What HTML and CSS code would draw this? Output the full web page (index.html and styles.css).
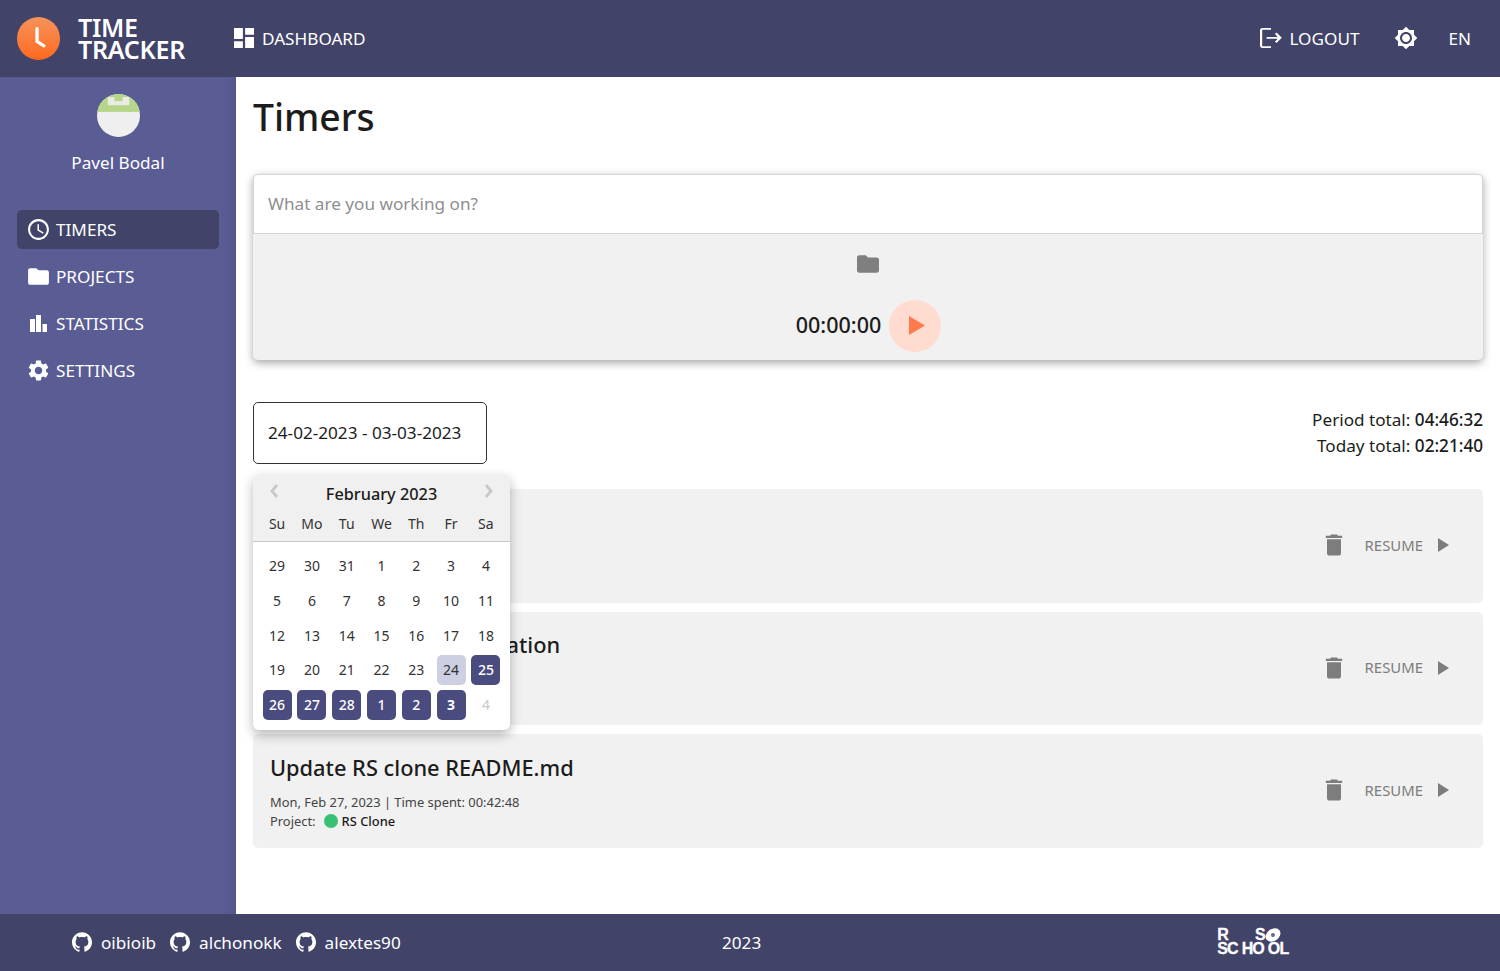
FILE: index.html
```html
<!DOCTYPE html>
<html lang="en">
<head>
<meta charset="utf-8">
<title>Time Tracker</title>
<link rel="stylesheet" href="styles.css">
</head>
<body>
<header class="topbar">
  <div class="brand">
    <svg class="brand-logo" viewBox="0 0 44 44"><defs><linearGradient id="lg" x1="0" y1="0" x2="0" y2="1"><stop offset="0" stop-color="#f5935a"/><stop offset="1" stop-color="#ff6a1f"/></linearGradient></defs><circle cx="22" cy="22" r="22" fill="url(#lg)"/><path d="M20.500 12v13l7 4.500" fill="none" stroke="#fff" stroke-width="3.400" stroke-linecap="round" stroke-linejoin="round"/></svg>
    <div class="brand-name">TIME<br>TRACKER</div>
  </div>
  <a class="top-link dash"><svg class="ico-dash" viewBox="3 3 18 18"><path d="M3 13h8V3H3v10zm0 8h8v-6H3v6zm10 0h8V11h-8v10zm0-18v6h8V3h-8z"/></svg>DASHBOARD</a>
  <div class="top-right">
    <a class="top-link logout"><svg class="ico-logout" viewBox="2 3 20 18"><path d="M17 7l-1.410 1.410L18.170 11H8v1.600h10.170l-2.580 2.580L17 16.600l4.800-4.800zM4 4.600h8V3H4c-1.100 0-2 .9-2 2v14c0 1.100.9 2 2 2h8v-1.600H4z"/></svg>LOGOUT</a>
    <svg class="ico-bright" viewBox="0 0 24 24"><path d="M20 8.690V4h-4.690L12 .69 8.690 4H4v4.690L.69 12 4 15.310V20h4.690L12 23.310 15.310 20H20v-4.690L23.310 12 20 8.690zM12 18c-3.310 0-6-2.690-6-6s2.690-6 6-6 6 2.690 6 6-2.690 6-6 6zm0-10c-2.210 0-4 1.790-4 4s1.790 4 4 4 4-1.790 4-4-1.790-4-4-4z"/></svg>
    <span class="lang">EN</span>
  </div>
</header>
<div class="middle">
  <aside class="sidebar">
    <svg class="avatar" viewBox="0 0 42 42"><defs><clipPath id="ac"><circle cx="21" cy="21" r="21"/></clipPath></defs><g clip-path="url(#ac)"><rect width="42" height="42" fill="#efefef"/><rect width="42" height="17.500" fill="#b6d68a"/><rect x="10.500" y="3" width="21" height="8" fill="#e9ebe4"/><rect x="17" y="2" width="8" height="5" fill="#b6d68a"/></g></svg>
    <div class="user">Pavel Bodal</div>
    <nav class="nav">
      <a class="nav-item active"><svg viewBox="0 0 24 24"><path d="M11.990 2C6.470 2 2 6.480 2 12s4.470 10 9.990 10C17.520 22 22 17.520 22 12S17.520 2 11.990 2zM12 20c-4.420 0-8-3.580-8-8s3.580-8 8-8 8 3.580 8 8-3.580 8-8 8zm.5-13H11v6l5.250 3.150.75-1.230-4.500-2.670z"/></svg>TIMERS</a>
      <a class="nav-item"><svg viewBox="0 0 24 24"><path d="M10 4H4c-1.100 0-1.990.9-1.990 2L2 18c0 1.100.9 2 2 2h16c1.100 0 2-.9 2-2V8c0-1.100-.9-2-2-2h-8l-2-2z"/></svg>PROJECTS</a>
      <a class="nav-item"><svg viewBox="0 0 25 25"><path d="M4 8h5v13H4zM10 4h5v17h-5zM16.500 13H21v8h-4.500z"/></svg>STATISTICS</a>
      <a class="nav-item"><svg viewBox="0 0 24 24"><path d="M19.140 12.940c.04-.3.06-.61.06-.94 0-.32-.02-.64-.07-.94l2.030-1.580c.18-.14.23-.41.12-.61l-1.920-3.320c-.12-.22-.37-.29-.59-.22l-2.390.96c-.5-.38-1.030-.7-1.620-.94l-.36-2.540c-.04-.24-.24-.41-.48-.41h-3.840c-.24 0-.43.17-.47.41l-.36 2.540c-.59.24-1.130.57-1.620.94l-2.390-.96c-.22-.08-.47 0-.59.22L2.740 8.870c-.12.21-.08.47.12.61l2.030 1.580c-.05.3-.09.63-.09.94s.02.64.07.94l-2.030 1.580c-.18.14-.23.41-.12.61l1.920 3.320c.12.22.37.29.59.22l2.390-.96c.5.38 1.030.7 1.620.94l.36 2.540c.05.24.24.41.48.41h3.840c.24 0 .44-.17.47-.41l.36-2.540c.59-.24 1.130-.56 1.620-.94l2.390.96c.22.08.47 0 .59-.22l1.920-3.320c.12-.22.07-.47-.12-.61l-2.010-1.580zM12 15.600c-1.980 0-3.600-1.620-3.600-3.600s1.620-3.600 3.600-3.600 3.600 1.620 3.600 3.600-1.620 3.600-3.600 3.600z"/></svg>SETTINGS</a>
    </nav>
  </aside>
  <main class="content">
    <h1 class="title">Timers</h1>
    <section class="new-timer">
      <div class="task-input">What are you working on?</div>
      <div class="new-timer-body">
        <svg class="ico-folder" viewBox="2 4 20 16"><path d="M10 4H4c-1.100 0-1.990.9-1.990 2L2 18c0 1.100.9 2 2 2h16c1.100 0 2-.9 2-2V8c0-1.100-.9-2-2-2h-8l-2-2z"/></svg>
        <div class="clock-row">
          <span class="clock">00:00:00</span>
          <span class="play"><svg viewBox="0 0 16 19"><path d="M0 0v19l16-9.500z"/></svg></span>
        </div>
      </div>
    </section>
    <section class="filter-row">
      <div class="date-wrap">
        <div class="date-input">24-02-2023 - 03-03-2023</div>
        <div class="calendar">
          <div class="cal-head">
            <div class="cal-month">
              <svg viewBox="0 0 10 16"><path d="M8 2L3 8l5 6" /></svg>
              <span>February 2023</span>
              <svg viewBox="0 0 10 16"><path d="M2 2l5 6-5 6" /></svg>
            </div>
            <div class="cal-grid cal-names"><span>Su</span><span>Mo</span><span>Tu</span><span>We</span><span>Th</span><span>Fr</span><span>Sa</span></div>
          </div>
          <div class="cal-grid cal-days">
            <span>29</span><span>30</span><span>31</span><span>1</span><span>2</span><span>3</span><span>4</span>
            <span>5</span><span>6</span><span>7</span><span>8</span><span>9</span><span>10</span><span>11</span>
            <span>12</span><span>13</span><span>14</span><span>15</span><span>16</span><span>17</span><span>18</span>
            <span>19</span><span>20</span><span>21</span><span>22</span><span>23</span><span class="start">24</span><span class="sel">25</span>
            <span class="sel">26</span><span class="sel">27</span><span class="sel">28</span><span class="sel">1</span><span class="sel">2</span><span class="sel bold">3</span><span class="off">4</span>
          </div>
        </div>
      </div>
      <div class="totals">
        <div>Period total: <b>04:46:32</b></div>
        <div>Today total: <b>02:21:40</b></div>
      </div>
    </section>
    <section class="timers">
      <article class="timer">
        <div class="timer-info">
          <div class="timer-title">Write project tests</div>
          <div class="timer-meta">Feb 28, 2023 | Time spent: 01:42:04</div>
          <div class="timer-meta">Project: <i class="dot"></i><b>RS Clone</b></div>
        </div>
        <div class="timer-actions"><svg class="ico-trash" viewBox="0 0 24 24"><path d="M6 19c0 1.100.9 2 2 2h8c1.100 0 2-.9 2-2V7H6v12zM19 4h-3.500l-1-1h-5l-1 1H5v2h14V4z"/></svg><span class="resume">RESUME</span><svg class="ico-play" viewBox="0 0 24 24"><path d="M8 5v14l11-7z"/></svg></div>
      </article>
      <article class="timer">
        <div class="timer-info">
          <div class="timer-title">Design project presentation</div>
          <div class="timer-meta">Feb 28, 2023 | Time spent: 00:39:36</div>
          <div class="timer-meta">Project: <i class="dot"></i><b>RS Clone</b></div>
        </div>
        <div class="timer-actions"><svg class="ico-trash" viewBox="0 0 24 24"><path d="M6 19c0 1.100.9 2 2 2h8c1.100 0 2-.9 2-2V7H6v12zM19 4h-3.500l-1-1h-5l-1 1H5v2h14V4z"/></svg><span class="resume">RESUME</span><svg class="ico-play" viewBox="0 0 24 24"><path d="M8 5v14l11-7z"/></svg></div>
      </article>
      <article class="timer">
        <div class="timer-info">
          <div class="timer-title">Update RS clone README.md</div>
          <div class="timer-meta">Mon, Feb 27, 2023 | Time spent: 00:42:48</div>
          <div class="timer-meta">Project: <i class="dot"></i><b>RS Clone</b></div>
        </div>
        <div class="timer-actions"><svg class="ico-trash" viewBox="0 0 24 24"><path d="M6 19c0 1.100.9 2 2 2h8c1.100 0 2-.9 2-2V7H6v12zM19 4h-3.500l-1-1h-5l-1 1H5v2h14V4z"/></svg><span class="resume">RESUME</span><svg class="ico-play" viewBox="0 0 24 24"><path d="M8 5v14l11-7z"/></svg></div>
      </article>
    </section>
  </main>
</div>
<footer class="footer">
  <div class="authors">
    <a class="author"><svg viewBox="0 0 24 24"><path d="M12 .297c-6.630 0-12 5.373-12 12 0 5.303 3.438 9.800 8.205 11.385.6.113.82-.258.82-.577 0-.285-.01-1.040-.015-2.040-3.338.724-4.042-1.610-4.042-1.610C4.422 18.070 3.633 17.700 3.633 17.700c-1.087-.744.084-.729.084-.729 1.205.084 1.838 1.236 1.838 1.236 1.070 1.835 2.809 1.305 3.495.998.108-.776.417-1.305.76-1.605-2.665-.3-5.466-1.332-5.466-5.930 0-1.310.465-2.380 1.235-3.220-.135-.303-.54-1.523.105-3.176 0 0 1.005-.322 3.300 1.230.96-.267 1.980-.399 3-.405 1.020.006 2.040.138 3 .405 2.280-1.552 3.285-1.230 3.285-1.230.645 1.653.24 2.873.12 3.176.765.84 1.230 1.910 1.230 3.220 0 4.610-2.805 5.625-5.475 5.920.42.36.81 1.096.81 2.220 0 1.606-.015 2.896-.015 3.286 0 .315.21.69.825.57C20.565 22.092 24 17.592 24 12.297c0-6.627-5.373-12-12-12"/></svg>oibioib</a>
    <a class="author"><svg viewBox="0 0 24 24"><path d="M12 .297c-6.630 0-12 5.373-12 12 0 5.303 3.438 9.800 8.205 11.385.6.113.82-.258.82-.577 0-.285-.01-1.040-.015-2.040-3.338.724-4.042-1.610-4.042-1.610C4.422 18.070 3.633 17.700 3.633 17.700c-1.087-.744.084-.729.084-.729 1.205.084 1.838 1.236 1.838 1.236 1.070 1.835 2.809 1.305 3.495.998.108-.776.417-1.305.76-1.605-2.665-.3-5.466-1.332-5.466-5.930 0-1.310.465-2.380 1.235-3.220-.135-.303-.54-1.523.105-3.176 0 0 1.005-.322 3.300 1.230.96-.267 1.980-.399 3-.405 1.020.006 2.040.138 3 .405 2.280-1.552 3.285-1.230 3.285-1.230.645 1.653.24 2.873.12 3.176.765.84 1.230 1.910 1.230 3.220 0 4.610-2.805 5.625-5.475 5.920.42.36.81 1.096.81 2.220 0 1.606-.015 2.896-.015 3.286 0 .315.21.69.825.57C20.565 22.092 24 17.592 24 12.297c0-6.627-5.373-12-12-12"/></svg>alchonokk</a>
    <a class="author"><svg viewBox="0 0 24 24"><path d="M12 .297c-6.630 0-12 5.373-12 12 0 5.303 3.438 9.800 8.205 11.385.6.113.82-.258.82-.577 0-.285-.01-1.040-.015-2.040-3.338.724-4.042-1.610-4.042-1.610C4.422 18.070 3.633 17.700 3.633 17.700c-1.087-.744.084-.729.084-.729 1.205.084 1.838 1.236 1.838 1.236 1.070 1.835 2.809 1.305 3.495.998.108-.776.417-1.305.76-1.605-2.665-.3-5.466-1.332-5.466-5.930 0-1.310.465-2.380 1.235-3.220-.135-.303-.54-1.523.105-3.176 0 0 1.005-.322 3.300 1.230.96-.267 1.980-.399 3-.405 1.020.006 2.040.138 3 .405 2.280-1.552 3.285-1.230 3.285-1.230.645 1.653.24 2.873.12 3.176.765.84 1.230 1.910 1.230 3.220 0 4.610-2.805 5.625-5.475 5.920.42.36.81 1.096.81 2.220 0 1.606-.015 2.896-.015 3.286 0 .315.21.69.825.57C20.565 22.092 24 17.592 24 12.297c0-6.627-5.373-12-12-12"/></svg>alextes90</a>
  </div>
  <div class="year">2023</div>
  <div class="school">
    <div class="school-line top"><span>R</span><span>S</span></div>
    <div class="school-line"><span>SC</span><span>HO</span><span>OL</span></div>
    <i class="school-mark"></i>
  </div>
</footer>
</body>
</html>
```
FILE: styles.css
```css
* { box-sizing: border-box; }
html, body { height: 100%; }
body {
  margin: 0;
  height: 971px;
  display: flex;
  flex-direction: column;
  overflow: hidden;
  font-family: "Noto Sans", sans-serif;
  font-size: 17.150px;
  color: #1c1c1c;
  background: #fff;
}
svg { fill: currentColor; display: block; flex: none; }

.topbar {
  height: 77px;
  flex: none;
  background: #414369;
  color: #fff;
  display: flex;
  align-items: center;
  padding: 0 29px 1px 17px;
}
.brand { display: flex; align-items: center; width: 217px; }
.brand-logo { width: 43px; height: 43px; }
.brand-name {
  margin-left: 18px;
  font-weight: 600;
  font-size: 25.100px;
  line-height: 22px;
  letter-spacing: -.3px;
}
.top-link { display: flex; align-items: center; }
.ico-dash { width: 20px; height: 20px; margin-right: 8px; }
.top-right { margin-left: auto; display: flex; align-items: center; }
.ico-logout { width: 22px; height: 20px; margin-right: 7px; }
.ico-bright { width: 24px; height: 24px; margin-left: 35px; }
.lang { margin-left: 30px; }

.middle { flex: 1; display: flex; min-height: 0; }
.sidebar {
  width: 236px;
  flex: none;
  background: #5a5c94;
  box-shadow: inset -12px 0 14px -12px rgba(50, 52, 90, .25);
  color: #fff;
  display: flex;
  flex-direction: column;
  align-items: center;
  padding-top: 17px;
}
.avatar { width: 43px; height: 43px; }
.user { margin-top: 14px; line-height: 24px; }
.nav { align-self: stretch; margin-top: 35px; padding: 0 17px; display: flex; flex-direction: column; gap: 8.500px; }
.nav-item {
  height: 38.500px;
  border-radius: 5px;
  padding: 0 0 0 9px;
  display: flex;
  align-items: center;
}
.nav-item svg { width: 25px; height: 25px; margin-right: 5px; }
.nav-item.active { background: #414369; }

.content { flex: 1; min-width: 0; padding: 0 17px; }
.title {
  margin: 13px 0 0;
  font-size: 37.300px;
  font-weight: 500;
  line-height: 54px;
}
.new-timer {
  margin-top: 30px;
  height: 186px;
  border-radius: 5px;
  background: #f1f1f1;
  box-shadow: 0 3px 8px rgba(0, 0, 0, .35);
  display: flex;
  flex-direction: column;
}
.task-input {
  height: 60px;
  flex: none;
  background: #fff;
  border: 1px solid #d4d4d4;
  border-radius: 5px 5px 0 0;
  padding: 0 0 1px 14px;
  display: flex;
  align-items: center;
  color: #8f8f8f;
}
.new-timer-body { flex: 1; display: flex; flex-direction: column; align-items: center; padding-top: 21px; }
.ico-folder { width: 22px; height: 18px; color: #7f7f7f; }
.clock-row { display: flex; align-items: center; margin-top: 26.500px; margin-left: 1px; }
.clock { font-size: 21.500px; font-weight: 500; padding-bottom: 2px; }
.play {
  width: 52px;
  height: 52px;
  margin-left: 8px;
  border-radius: 50%;
  background: #ffdccf;
  color: #ff7a4d;
  display: flex;
  align-items: center;
  justify-content: center;
}
.play svg { width: 16px; height: 19px; margin-left: 3px; }

.filter-row { margin-top: 42px; display: flex; justify-content: space-between; align-items: flex-start; }
.date-wrap { position: relative; }
.date-input {
  width: 234px;
  height: 62px;
  border: 1px solid #333;
  border-radius: 5px;
  padding: 0 0 1px 14px;
  display: flex;
  align-items: center;
}
.calendar {
  position: absolute;
  left: 0;
  top: 72px;
  width: 257px;
  height: 256px;
  z-index: 2;
  background: #fff;
  border-radius: 6px;
  box-shadow: 0 5px 12px rgba(0, 0, 0, .28);
  overflow: hidden;
  font-size: 14px;
}
.cal-head { background: #f0f0f0; border-bottom: 1px solid #c9c9c9; height: 68px; padding-top: 7px; }
.cal-month { display: flex; align-items: center; justify-content: space-between; height: 26px; padding: 0 16px; font-size: 16.300px; font-weight: 500; }
.cal-month svg { width: 10px; height: 16px; fill: none; stroke: #c8c8c8; stroke-width: 2.800; margin-top: -7px; }
.cal-grid { display: grid; grid-template-columns: repeat(7, 29px); column-gap: 5.800px; justify-content: center; text-align: center; }
.cal-names { margin-top: 6px; line-height: 22px; color: #333; }
.cal-days { row-gap: 5.300px; padding-top: 9px; color: #333; }
.cal-days span { height: 29.500px; line-height: 29.500px; border-radius: 5px; }
.cal-days .start { background: #cdcfe2; }
.cal-days .sel { background: #4a4c80; color: #fff; font-weight: 500; }
.cal-days .bold { font-weight: 700; }
.cal-days .off { color: #c8c8c8; }

.totals { text-align: right; line-height: 25.500px; padding-top: 5px; }
.totals b { font-weight: 500; }

.timers { margin-top: 25px; display: flex; flex-direction: column; gap: 9px; }
.timer {
  height: 113.500px;
  background: #f1f1f1;
  border-radius: 5px;
  display: flex;
  align-items: center;
  justify-content: space-between;
  padding: 2px 29px 0 17px;
}
.timer-title { font-size: 21.800px; font-weight: 500; line-height: 30px; margin-bottom: 10px; }
.timer-meta { font-size: 12.900px; line-height: 19px; color: #444; display: flex; align-items: center; }
.timer-meta b { font-weight: 500; color: #1c1c1c; }
.dot { width: 14px; height: 14px; border-radius: 50%; background: #38c172; margin: 0 4px 0 8px; }
.timer-actions { display: flex; align-items: center; color: #7d7d7d; padding-bottom: 3px; }
.ico-trash { width: 28px; height: 28px; }
.resume { margin-left: 17px; font-size: 14.900px; padding-bottom: 1px; }
.ico-play { width: 24px; height: 24px; margin-left: 7px; }

.footer {
  height: 57px;
  flex: none;
  background: #414369;
  color: #fff;
  display: flex;
  align-items: center;
  padding: 0 0 1px 72px;
}
.authors { display: flex; gap: 14px; width: 650px; }
.author { display: flex; align-items: center; }
.author svg { width: 20px; height: 20px; margin-right: 9px; }
.school {
  margin-left: 456px;
  width: 72px;
  position: relative;
  font-family: "Liberation Sans", sans-serif;
  font-weight: 700;
  font-size: 16px;
  line-height: 14.500px;
  letter-spacing: -.9px;
  -webkit-text-stroke: .3px #fff;
}
.school-line { display: flex; gap: 4px; }
.school-line.top { gap: 27px; }
.school-mark { position: absolute; left: 48px; top: 1px; width: 16px; height: 12px; border-radius: 50%; background: #fff; transform: rotate(-35deg); }
.school-mark::after { content: ""; position: absolute; left: 6px; top: 4px; width: 4px; height: 4px; border-radius: 50%; background: #6a6c90; }
```
